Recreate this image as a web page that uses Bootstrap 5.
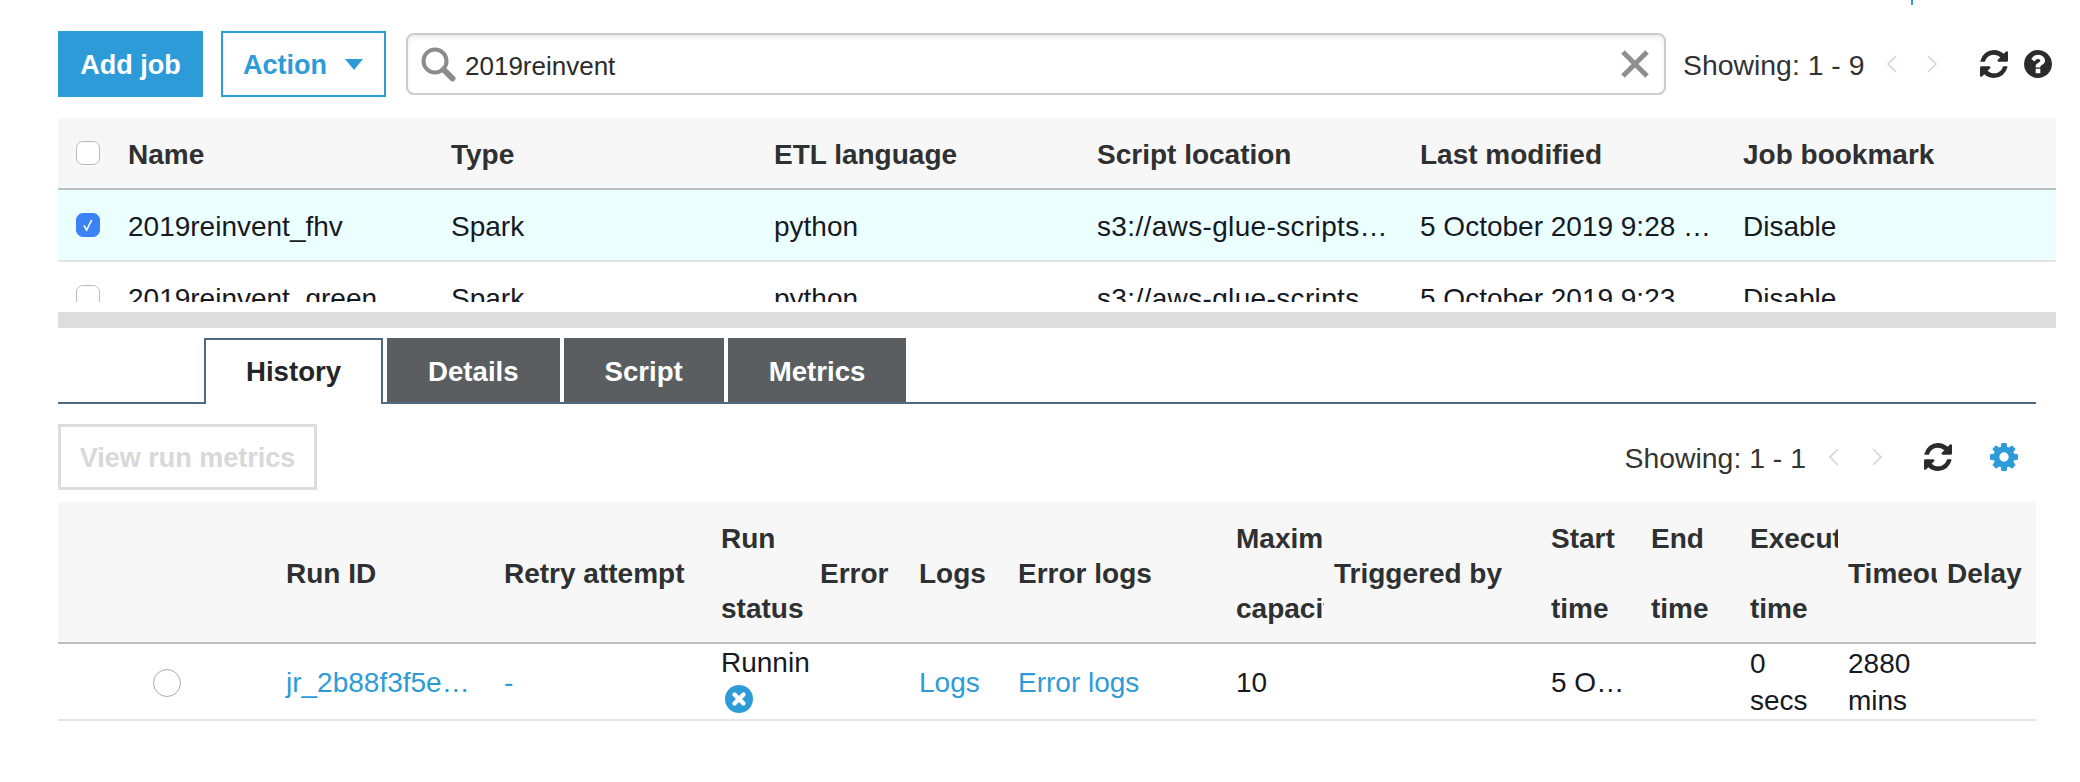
<!DOCTYPE html>
<html lang="en">
<head>
  <meta charset="UTF-8" />
  <meta name="viewport" content="width=device-width, initial-scale=1.0"/>
  <title>Jobs</title>
  <link href="https://cdn.jsdelivr.net/npm/bootstrap@5.3.6/dist/css/bootstrap.min.css" rel="stylesheet"/>
  <style>
    body {
      font-family: "Liberation Sans", Arial, sans-serif;
      font-size: 28px;
      color: #333;
      background: #fff;
      height: 782px;
      overflow: hidden;
    }
    .page-wrap { padding: 0 24px 0 58px; }
    .top-cut { height: 5px; }
    .top-cut span { display: block; width: 2px; height: 5px; margin-left: 1853px; background: #2e9bd9; }

    /* toolbar */
    .job-toolbar { margin-top: 26px; height: 66px; }
    .btn-aws {
      height: 66px;
      border-radius: 0;
      font-size: 27px;
      font-weight: 700;
      line-height: 1;
      padding: 3px 0 0;
      white-space: nowrap;
    }
    .btn-add, .btn-add:hover { width: 145px; background: #2e9bd9; border: 2px solid #2e9bd9; color: #fff; }
    .btn-action, .btn-action:hover { width: 165px; margin-left: 18px; background: #fff; border: 2px solid #2e9bd9; color: #2e9bd9; padding: 3px 21px 0 20px; }
    .btn-action i { width: 0; height: 0; margin-top: -2px; border-left: 9px solid transparent; border-right: 9px solid transparent; border-top: 11px solid #2e9bd9; }
    .search-box {
      width: 1260px;
      height: 62px;
      margin-left: 20px;
      border: 2px solid #ccc;
      border-radius: 8px;
      box-shadow: inset 0 3px 4px rgba(0,0,0,.07);
      padding: 0 15px 0 12px;
      font-size: 26px;
      color: #2b2b2b;
    }
    .search-box .txt { margin-left: 9px; padding-top: 3px; line-height: 1; }
    .pager-text { font-size: 28.4px; color: #333; white-space: nowrap; line-height: 1; padding-top: 3px; }
    .pager-one { margin-left: 17px; }
    .chev { display: block; }
    .chev-gap { margin-left: 22px; }
    .chev-gap2 { margin-left: 30px; }

    /* tables */
    .job-table { table-layout: fixed; width: 100%; margin: 0; border-collapse: separate; border-spacing: 0; color: #16191f; }
    .job-table > thead > tr > th {
      background: #f7f7f7;
      color: #2e3031;
      font-weight: 700;
      vertical-align: middle;
      border-bottom: 2px solid #bcbec0;
      overflow: hidden;
    }
    .job-table > tbody > tr > td {
      vertical-align: middle;
      border-bottom: 2px solid #e3e5e6;
      overflow: hidden;
    }
    .upper-clip { height: 184px; overflow: hidden; margin-top: 21px; }
    .upper > thead > tr > th, .upper > tbody > tr > td {
      height: 72px;
      padding: 3px 12px 0 12px;
      line-height: 1;
      white-space: nowrap;
    }
    .upper > thead > tr > th:first-child, .upper > tbody > tr > td:first-child { padding: 0 0 0 18px; }
    .upper > tbody > tr.row-sel > td { background-color: #ebffff; }
    .upper .script-cell { letter-spacing: .35px; }
    .pick { width: 24px; height: 24px; margin: 0; border: 1px solid #bbb; border-radius: 6px; display: block; }
    .form-check-input.pick:checked {
      background-color: #3b82f6;
      border-color: #3b82f6;
      background-image: url("data:image/svg+xml,%3csvg xmlns='http://www.w3.org/2000/svg' viewBox='0 0 24 24'%3e%3cpath fill='none' stroke='%23fff' stroke-width='1.7' d='M7.5 12.5l3 5 5.5-11'/%3e%3c/svg%3e");
    }
    .job-resizer { height: 16px; margin-top: 10px; background: #ddd; }

    /* tabs */
    .lower { padding-right: 20px; }
    .job-tabs { margin-top: 10px; padding-left: 146px; border-bottom: 2px solid #4f6a80; gap: 4px; }
    .job-tabs .nav-link, .job-tabs .nav-link:hover {
      height: 64px;
      padding: 0 41px;
      border: 0;
      border-radius: 0;
      background: #5a5e60;
      color: #fff;
      font-weight: 700;
      font-size: 27.6px;
      line-height: 67px;
      margin-bottom: 0;
    }
    .job-tabs .nav-link.active {
      height: 66px;
      margin-bottom: -2px;
      background: #fff;
      color: #232526;
      border: 2px solid #4f6a80;
      border-bottom: 0;
      padding: 0 40px;
      line-height: 63px;
    }
    .btn-metrics, .btn-metrics:disabled {
      width: 259px;
      height: 66px;
      border-radius: 0;
      border: 3px solid #ddd;
      background: #fff;
      color: #d7d9d9;
      font-size: 27px;
      font-weight: 700;
      padding: 3px 0 0;
      line-height: 1;
      opacity: 1;
    }
    .runs-bar { margin-top: 20px; height: 66px; }
    .runs-bar .pager-text { margin-left: auto; }
    .runs-table { margin-top: 12px; }
    .runs > thead > tr > th { height: 142px; padding: 0 0 0 10px; line-height: 70px; }
    .runs .hd { margin: 2px 0 -2px; }
    .runs > tbody > tr > td { height: 77px; padding: 2px 0 0 10px; line-height: 37.5px; white-space: nowrap; }
    .runs > tbody > tr > td.status-cell { padding-top: 0; }
    .runs > tbody > tr > td.wrap-cell { white-space: normal; padding-right: 12px; line-height: 36.5px; }
    .runs a { color: #2e9bd9; text-decoration: none; }
    .runs .pick-radio { width: 28px; height: 28px; margin: 0 auto; padding: 0; border: 1px solid #aaa; display: block; transform: translateX(-5px); }
    .runs .stop-ic { display: block; margin: 3.5px 0 6px 4px; }
  </style>
</head>
<body>
  <div class="page-wrap">
    <div class="top-cut"><span></span></div>

    <div class="job-toolbar d-flex align-items-center">
      <button type="button" class="btn btn-aws btn-add">Add job</button>
      <button type="button" class="btn btn-aws btn-action d-flex align-items-center justify-content-between">Action <i></i></button>
      <div class="search-box d-flex align-items-center">
        <svg width="36" height="36" viewBox="0 0 36 36" fill="none" stroke="#8c8c8c"><circle cx="15" cy="15" r="11.5" stroke-width="4"/><path d="M23.5 23.5l9 9" stroke-width="6" stroke-linecap="round"/></svg>
        <span class="txt flex-grow-1">2019reinvent</span>
        <svg width="28" height="28" viewBox="0 0 28 28" fill="none" stroke="#8f8f8f" stroke-width="5"><path d="M2 2l24 24M26 2L2 26"/></svg>
      </div>
      <span class="pager-text pager-one">Showing: 1 - 9</span>
      <svg class="chev chev-gap" width="10" height="18" viewBox="0 0 10 18" fill="none" stroke="#d5d5d5" stroke-width="1.6"><path d="M9 1L1 9l8 8"/></svg>
      <svg class="chev chev-gap2" width="10" height="18" viewBox="0 0 10 18" fill="none" stroke="#d5d5d5" stroke-width="1.6"><path d="M1 1l8 8-8 8"/></svg>
      <svg class="ms-auto" style="margin-right:16px" width="28" height="28" viewBox="128 128 1536 1536" fill="#2b2b2b"><path d="M1639 1056q0 5-1 7-64 268-268 434.5t-478 166.5q-146 0-282.5-55t-243.5-157l-129 129q-19 19-45 19t-45-19-19-45v-448q0-26 19-45t45-19h448q26 0 45 19t19 45-19 45l-137 137q71 66 161 102t187 36q134 0 250-65t186-179q11-17 53-117 8-23 30-23h192q13 0 22.5 9.5t9.5 22.5zm25-800v448q0 26-19 45t-45 19h-448q-26 0-45-19t-19-45 19-45l138-138q-148-137-349-137-134 0-250 65t-186 179q-11 17-53 117-8 23-30 23h-199q-13 0-22.5-9.5t-9.5-22.5v-7q65-268 270-434.5t480-166.5q146 0 284 55.5t245 156.5l130-129q19-19 45-19t45 19 19 45z"/></svg>
      <svg style="margin-right:4px" width="28" height="28" viewBox="128 128 1536 1536" fill="#2b2b2b"><path d="M1024 1376v-192q0-14-9-23t-23-9h-192q-14 0-23 9t-9 23v192q0 14 9 23t23 9h192q14 0 23-9t9-23zm256-672q0-88-55.5-163t-138.5-116-170-41q-243 0-371 213-15 24 8 42l132 100q7 6 19 6 16 0 25-12 53-68 86-92 34-24 86-24 48 0 85.5 26t37.5 59q0 38-20 61t-68 45q-63 28-115.5 86.5t-52.5 125.5v36q0 14 9 23t23 9h192q14 0 23-9t9-23q0-19 21.5-49.5t54.5-49.5q32-18 49-28.5t46-35 44.5-48 28-60.5 12.5-81zm384 192q0 209-103 385.5t-279.5 279.5-385.5 103-385.5-103-279.5-279.5-103-385.5 103-385.5 279.5-279.5 385.5-103 385.5 103 279.5 279.5 103 385.5z"/></svg>
    </div>

    <div class="upper-clip">
      <table class="table job-table upper">
        <colgroup>
          <col style="width:58px"><col style="width:323px"><col style="width:323px"><col style="width:323px"><col style="width:323px"><col style="width:323px"><col>
        </colgroup>
        <thead>
          <tr>
            <th><input class="form-check-input pick" type="checkbox" aria-label="Select all"></th>
            <th>Name</th><th>Type</th><th>ETL language</th><th>Script location</th><th>Last modified</th><th>Job bookmark</th>
          </tr>
        </thead>
        <tbody>
          <tr class="row-sel">
            <td><input class="form-check-input pick" type="checkbox" checked aria-label="Select"></td>
            <td>2019reinvent_fhv</td><td>Spark</td><td>python</td><td class="script-cell">s3://aws-glue-scripts…</td><td>5 October 2019 9:28 …</td><td>Disable</td>
          </tr>
          <tr>
            <td><input class="form-check-input pick" type="checkbox" aria-label="Select"></td>
            <td>2019reinvent_green</td><td>Spark</td><td>python</td><td class="script-cell">s3://aws-glue-scripts…</td><td>5 October 2019 9:23 …</td><td>Disable</td>
          </tr>
        </tbody>
      </table>
    </div>
    <div class="job-resizer"></div>

    <div class="lower">
      <ul class="nav nav-tabs job-tabs">
        <li class="nav-item"><a class="nav-link active" href="#">History</a></li>
        <li class="nav-item"><a class="nav-link" href="#">Details</a></li>
        <li class="nav-item"><a class="nav-link" href="#">Script</a></li>
        <li class="nav-item"><a class="nav-link" href="#">Metrics</a></li>
      </ul>

      <div class="runs-bar d-flex align-items-center">
        <button type="button" class="btn btn-metrics" disabled>View run metrics</button>
        <span class="pager-text">Showing: 1 - 1</span>
        <svg class="chev" style="margin-left:23px" width="10" height="18" viewBox="0 0 10 18" fill="none" stroke="#d5d5d5" stroke-width="1.6"><path d="M9 1L1 9l8 8"/></svg>
        <svg class="chev" style="margin-left:33px" width="10" height="18" viewBox="0 0 10 18" fill="none" stroke="#d5d5d5" stroke-width="1.6"><path d="M1 1l8 8-8 8"/></svg>
        <svg style="margin-left:42px" width="28" height="28" viewBox="128 128 1536 1536" fill="#2b2b2b"><path d="M1639 1056q0 5-1 7-64 268-268 434.5t-478 166.5q-146 0-282.5-55t-243.5-157l-129 129q-19 19-45 19t-45-19-19-45v-448q0-26 19-45t45-19h448q26 0 45 19t19 45-19 45l-137 137q71 66 161 102t187 36q134 0 250-65t186-179q11-17 53-117 8-23 30-23h192q13 0 22.5 9.5t9.5 22.5zm25-800v448q0 26-19 45t-45 19h-448q-26 0-45-19t-19-45 19-45l138-138q-148-137-349-137-134 0-250 65t-186 179q-11 17-53 117-8 23-30 23h-199q-13 0-22.5-9.5t-9.5-22.5v-7q65-268 270-434.5t480-166.5q146 0 284 55.5t245 156.5l130-129q19-19 45-19t45 19 19 45z"/></svg>
        <svg style="margin:0 18px 0 38px" width="28" height="28" viewBox="128 128 1536 1536" fill="#2e9bd9"><path d="M1152 896q0-106-75-181t-181-75-181 75-75 181 75 181 181 75 181-75 75-181zm512-109v222q0 12-8 23t-20 13l-185 28q-19 54-39 91 35 50 107 138 10 12 10 25t-9 23q-27 37-99 108t-94 71q-12 0-26-9l-138-108q-44 23-91 38-16 136-29 186-7 28-36 28h-222q-14 0-24.5-8.5t-11.5-21.5l-28-184q-49-16-90-37l-141 107q-10 9-25 9-14 0-25-11-126-114-165-168-7-10-7-23 0-12 8-23 15-21 51-66.5t54-70.5q-27-50-41-99l-183-27q-13-2-21-12.5t-8-23.5v-222q0-12 8-23t19-13l186-28q14-46 39-92-40-57-107-138-10-12-10-24 0-10 9-23 26-36 98.5-107.5t94.5-71.5q13 0 26 10l138 107q44-23 91-38 16-136 29-186 7-28 36-28h222q14 0 24.5 8.5t11.5 21.5l28 184q49 16 90 37l142-107q9-9 24-9 13 0 25 10 129 119 165 170 7 8 7 22 0 12-8 23-15 21-51 66.5t-54 70.5q26 50 41 98l183 28q13 2 21 12.5t8 23.5z"/></svg>
      </div>

      <div class="runs-table">
        <table class="table job-table runs">
          <colgroup>
            <col style="width:218px"><col style="width:218px"><col style="width:217px"><col style="width:99px"><col style="width:99px"><col style="width:99px"><col style="width:218px"><col style="width:98px"><col style="width:217px"><col style="width:100px"><col style="width:99px"><col style="width:98px"><col style="width:99px"><col>
          </colgroup>
          <thead>
            <tr>
              <th></th>
              <th><div class="hd">Run ID</div></th>
              <th><div class="hd">Retry attempt</div></th>
              <th><div class="hd">Run status</div></th>
              <th><div class="hd">Error</div></th>
              <th><div class="hd">Logs</div></th>
              <th><div class="hd">Error logs</div></th>
              <th><div class="hd">Maximum capacity</div></th>
              <th><div class="hd">Triggered by</div></th>
              <th><div class="hd">Start time</div></th>
              <th><div class="hd">End time</div></th>
              <th><div class="hd">Execution time</div></th>
              <th><div class="hd">Timeout</div></th>
              <th><div class="hd">Delay</div></th>
            </tr>
          </thead>
          <tbody>
            <tr>
              <td><input class="form-check-input pick-radio" type="radio" aria-label="Select run"></td>
              <td><a href="#">jr_2b88f3f5e…</a></td>
              <td><a href="#">-</a></td>
              <td class="status-cell">Running
                <svg class="stop-ic" width="28" height="28" viewBox="0 0 28 28"><circle cx="14" cy="14" r="14" fill="#2e9bd9"/><path d="M9.5 9.5l9 9M18.5 9.5l-9 9" stroke="#fff" stroke-width="4.4" stroke-linecap="round"/></svg>
              </td>
              <td></td>
              <td><a href="#">Logs</a></td>
              <td><a href="#">Error logs</a></td>
              <td>10</td>
              <td></td>
              <td>5 O…</td>
              <td></td>
              <td class="wrap-cell">0 secs</td>
              <td class="wrap-cell">2880 mins</td>
              <td></td>
            </tr>
          </tbody>
        </table>
      </div>
    </div>
  </div>
  <script src="https://cdn.jsdelivr.net/npm/bootstrap@5.3.6/dist/js/bootstrap.bundle.min.js"></script>
</body>
</html>
